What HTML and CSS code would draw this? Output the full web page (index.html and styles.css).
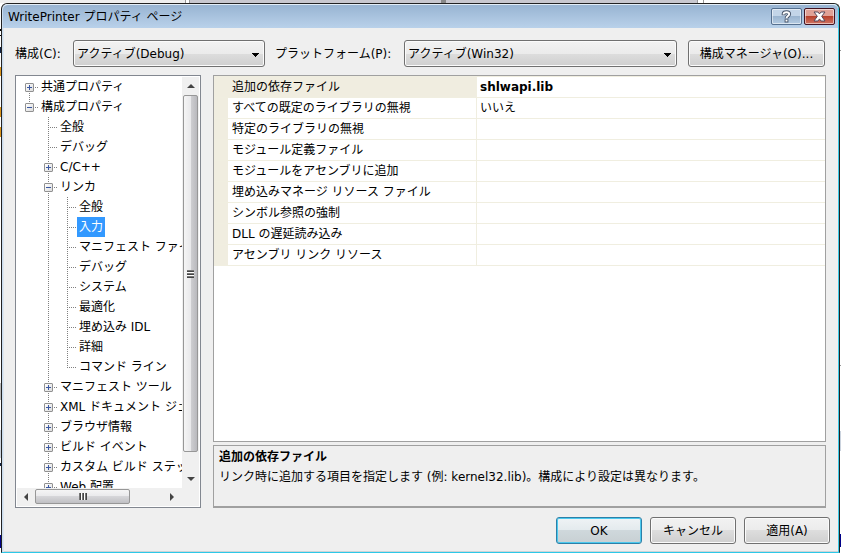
FILE: index.html
```html
<!DOCTYPE html>
<html lang="ja">
<head>
<meta charset="utf-8">
<title>WritePrinter プロパティ ページ</title>
<link rel="stylesheet" href="styles.css">
</head>
<body>
<main class="dialog">
  <header class="titlebar">
    <h1 class="title">WritePrinter プロパティ ページ</h1>
    <button class="caption help" type="button" aria-label="ヘルプ">
      <svg width="13" height="13" viewBox="0 0 13 13" aria-hidden="true"><path d="M3.6 5.2V3.9C3.6 1.4 9.2 1.4 9.2 4C9.2 6 6.5 5.9 6.5 8.6M6.5 9.2V12.4" fill="none" stroke="#48566b" stroke-width="3.8"/><path d="M3.6 4.6V3.9C3.6 1.6 9.2 1.6 9.2 4C9.2 6 6.5 5.9 6.5 8.2M6.5 9.8V11.6" fill="none" stroke="#fff" stroke-width="1.9"/></svg>
    </button>
    <button class="caption close" type="button" aria-label="閉じる">
      <svg width="13" height="11" viewBox="0 0 13 11" aria-hidden="true"><path d="M1 1H4.9L6.5 2.9L8.1 1H12L8.7 5.3L12 10H8.1L6.5 7.9L4.9 10H1L4.3 5.3Z" fill="#fff" stroke="#53475a"/></svg>
    </button>
  </header>

  <form class="content">
    <div class="toolbar">
      <label class="config-label" for="config">構成(C):</label>
      <select class="combo config" id="config"><option>アクティブ(Debug)</option></select>
      <label class="platform-label" for="platform">プラットフォーム(P):</label>
      <select class="combo platform" id="platform"><option>アクティブ(Win32)</option></select>
      <button class="btn manager" type="button">構成マネージャ(O)...</button>
    </div>

    <div class="panes">
      <nav class="tree-box">
        <div class="tree-view">
          <ul class="tree">
            <li><div class="row"><button class="expander plus" type="button" aria-label="展開"></button><span class="node">共通プロパティ</span></div></li>
            <li><div class="row"><button class="expander" type="button" aria-label="折りたたむ"></button><span class="node">構成プロパティ</span></div>
              <ul>
                <li><div class="row"><span class="node">全般</span></div></li>
                <li><div class="row"><span class="node">デバッグ</span></div></li>
                <li><div class="row"><button class="expander plus" type="button" aria-label="展開"></button><span class="node">C/C++</span></div></li>
                <li><div class="row"><button class="expander" type="button" aria-label="折りたたむ"></button><span class="node">リンカ</span></div>
                  <ul>
                    <li><div class="row"><span class="node">全般</span></div></li>
                    <li><div class="row"><span class="node selected">入力</span></div></li>
                    <li><div class="row"><span class="node">マニフェスト ファイル</span></div></li>
                    <li><div class="row"><span class="node">デバッグ</span></div></li>
                    <li><div class="row"><span class="node">システム</span></div></li>
                    <li><div class="row"><span class="node">最適化</span></div></li>
                    <li><div class="row"><span class="node">埋め込み IDL</span></div></li>
                    <li><div class="row"><span class="node">詳細</span></div></li>
                    <li><div class="row"><span class="node">コマンド ライン</span></div></li>
                  </ul>
                </li>
                <li><div class="row"><button class="expander plus" type="button" aria-label="展開"></button><span class="node">マニフェスト ツール</span></div></li>
                <li><div class="row"><button class="expander plus" type="button" aria-label="展開"></button><span class="node">XML ドキュメント ジェネレータ</span></div></li>
                <li><div class="row"><button class="expander plus" type="button" aria-label="展開"></button><span class="node">ブラウザ情報</span></div></li>
                <li><div class="row"><button class="expander plus" type="button" aria-label="展開"></button><span class="node">ビルド イベント</span></div></li>
                <li><div class="row"><button class="expander plus" type="button" aria-label="展開"></button><span class="node">カスタム ビルド ステップ</span></div></li>
                <li class="more"><div class="row"><button class="expander plus" type="button" aria-label="展開"></button><span class="node">Web 配置</span></div></li>
              </ul>
            </li>
          </ul>
        </div>
        <div class="vscroll" aria-hidden="true">
          <span class="arrow"><svg width="8" height="4" viewBox="0 0 8 4"><path d="M0 4L4 0L8 4Z" fill="#444"/></svg></span>
          <span class="thumb"><i class="grip"></i></span>
          <span class="arrow"><svg width="8" height="4" viewBox="0 0 8 4"><path d="M0 0L4 4L8 0Z" fill="#444"/></svg></span>
        </div>
        <div class="hscroll" aria-hidden="true">
          <span class="arrow"><svg width="4" height="8" viewBox="0 0 4 8"><path d="M4 0L0 4L4 8Z" fill="#444"/></svg></span>
          <span class="thumb"><i class="grip"></i></span>
          <span class="arrow"><svg width="4" height="8" viewBox="0 0 4 8"><path d="M0 0L4 4L0 8Z" fill="#444"/></svg></span>
        </div>
      </nav>

      <section class="properties">
        <div class="sheet">
          <table class="grid">
            <tbody>
              <tr class="current"><th scope="row">追加の依存ファイル</th><td>shlwapi.lib</td></tr>
              <tr><th scope="row">すべての既定のライブラリの無視</th><td>いいえ</td></tr>
              <tr><th scope="row">特定のライブラリの無視</th><td></td></tr>
              <tr><th scope="row">モジュール定義ファイル</th><td></td></tr>
              <tr><th scope="row">モジュールをアセンブリに追加</th><td></td></tr>
              <tr><th scope="row">埋め込みマネージ リソース ファイル</th><td></td></tr>
              <tr><th scope="row">シンボル参照の強制</th><td></td></tr>
              <tr><th scope="row">DLL の遅延読み込み</th><td></td></tr>
              <tr><th scope="row">アセンブリ リンク リソース</th><td></td></tr>
            </tbody>
          </table>
        </div>
        <div class="description">
          <h2>追加の依存ファイル</h2>
          <p>リンク時に追加する項目を指定します (例: kernel32.lib)。構成により設定は異なります。</p>
        </div>
      </section>
    </div>

    <footer class="actions">
      <button class="btn default" type="button">OK</button>
      <button class="btn" type="button">キャンセル</button>
      <button class="btn" type="button">適用(A)</button>
    </footer>
  </form>
</main>
</body>
</html>
```
FILE: styles.css
```css
* { box-sizing: border-box; }

body {
  margin: 0;
  height: 100vh;
  padding: 3px 1px 0;
  display: flex;
  overflow: hidden;
  font: 12px/20px "DejaVu Sans", "Noto Sans CJK JP", sans-serif;
  color: #000;
  /* slivers of the editor window behind the dialog */
  background:
    linear-gradient(#0000 29px, #000 29px 31px, #0000 31px 35px, #000 35px 36px, #0000 36px 47px, #124 47px 53px, #0000 53px 67px, #d9941c 67px 76px, #0000 76px 107px, #d9941c 107px 117px, #0000 117px 127px, #d9941c 127px 137px, #0000 137px 383px, #bbb 383px 400px, #0000 400px 430px, #cbd3de 430px 458px, #0000 458px 463px, #124 463px 466px, #0000 466px 535px, #008 535px 548px, #0000 548px) 0 0 / 1px 100% no-repeat,
    linear-gradient(#0000 50px, #999 50px 51px, #0000 51px 365px, #999 365px 366px, #0000 366px 431px, #cbd3de 431px 451px, #0000 451px 534px, #008 534px 547px, #0000 547px) 100% 0 / 1px 100% no-repeat,
    linear-gradient(90deg, #eee 185px, #999 185px 186px, #fff 186px 189px, #999 189px 190px, #c9c8cf 190px 441px, #888 441px 446px, #c9c8cf 446px 697px, #999 697px 698px, #fff 698px 703px, #999 703px 704px, #fff 704px) 0 0 / 100% 3px no-repeat,
    #fff;
}

.dialog {
  flex: 1;
  min-width: 0;
  display: flex;
  flex-direction: column;
  background: #efefef;
  border: 1px solid #222;
  border-bottom-color: #2cc8e8;
  border-radius: 6px 6px 0 0;
  box-shadow: inset 1px 0 #c9dcef, inset 2px 0 #dfe6ed, inset -1px 0 #3ccbe8, inset 0 -1px #cfd3d6;
}

.titlebar {
  display: flex;
  align-items: center;
  height: 24px;
  margin: 0 1px;
  padding: 0 3px 0 5px;
  border-top: 1px solid #e3edf7;
  border-radius: 5px 5px 0 0;
  background: linear-gradient(#98b4d2, #b9d1ea);
}
.title { flex: 1; margin: 0; font-size: 12px; font-weight: 400; }
.caption {
  display: grid;
  place-items: center;
  width: 31px;
  height: 17px;
  margin-left: 2px;
  padding: 0;
  border: 1px solid #56708f;
  border-radius: 2px;
  box-shadow: inset 0 0 0 1px #ffffff88;
}
.help { background: linear-gradient(#c3d5e8 50%, #9bb5d0 50%, #b4cbe2); }
.close { background: linear-gradient(#e0a196 45%, #b8412c 50%, #cf7463); border-color: #431422; }

.content {
  flex: 1;
  min-height: 0;
  display: flex;
  flex-direction: column;
  padding: 12px 13px 8px 13px;
}

.toolbar { display: flex; align-items: center; padding-right: 1px; }
.config-label { width: 58px; }
.platform-label { width: 139px; padding-left: 10px; }
.combo, .btn {
  height: 27px;
  padding: 0;
  font: inherit;
  color: #000;
  border: 1px solid #707070;
  border-radius: 3px;
  box-shadow: inset 0 0 0 1px #fbfbfb;
  background: linear-gradient(#f2f2f2, #ebebeb 50%, #dddddd 50%, #cfcfcf);
}
/* the stacked one-pixel bars form the drop-down arrow */
.combo {
  appearance: none;
  padding: 0 20px 0 3px;
  background:
    linear-gradient(#000, #000) right 5px top 12px / 7px 1px no-repeat,
    linear-gradient(#000, #000) right 6px top 13px / 5px 1px no-repeat,
    linear-gradient(#000, #000) right 7px top 14px / 3px 1px no-repeat,
    linear-gradient(#000, #000) right 8px top 15px / 1px 1px no-repeat,
    linear-gradient(#f2f2f2, #ebebeb 50%, #dddddd 50%, #cfcfcf);
}
.config { width: 192px; }
.platform { flex: 1; min-width: 0; }
.manager { width: 137px; margin-left: 11px; }

.panes {
  flex: 1;
  min-height: 0;
  display: flex;
  gap: 12px;
  margin: 8px 0 9px;
}

.tree-box {
  width: 186px;
  display: grid;
  grid-template-columns: minmax(0, 1fr) 17px;
  grid-template-rows: minmax(0, 1fr) 18px;
  padding: 1px;
  border: 1px solid #828790;
  background: #fff;
}
.tree-view { overflow: hidden; padding-left: 3px; }
.tree, .tree ul { list-style: none; margin: 0; padding: 0; }
.tree { white-space: nowrap; }
.tree li {
  padding-left: 19px;
  background: repeating-linear-gradient(#808080 0 1px, #0000 1px 2px) 9px 0 / 1px 100% no-repeat;
}
.tree li:last-child { background-size: 1px 10px; }
.tree li.more { background-size: 1px 100%; }
.tree > li:first-child { background-position: 9px 10px; }
.row {
  display: flex;
  align-items: center;
  height: 20px;
  margin-left: -10px;
  padding-left: 10px;
  background: repeating-linear-gradient(90deg, #808080 0 1px, #0000 1px 2px) 0 10px / 9px 1px no-repeat;
}
.expander {
  flex: none;
  width: 9px;
  height: 9px;
  margin: 1px 5px 0 -14px;
  padding: 0;
  border: 1px solid #919191;
  border-radius: 1px;
  background:
    linear-gradient(#3a57a0, #3a57a0) 1px 3px / 5px 1px no-repeat,
    linear-gradient(135deg, #fff, #dcdcdc);
}
.expander.plus {
  background:
    linear-gradient(#3a57a0, #3a57a0) 1px 3px / 5px 1px no-repeat,
    linear-gradient(#3a57a0, #3a57a0) 3px 1px / 1px 5px no-repeat,
    linear-gradient(135deg, #fff, #dcdcdc);
}
.node { padding: 0 2px; }
.selected { background: #3399ff; color: #fff; }

.vscroll, .hscroll { display: flex; background: #f0f0f0; }
.vscroll { flex-direction: column; padding: 0 1px; }
.hscroll { grid-column: 1 / -1; padding: 1px 18px 2px 0; }
.arrow { flex: none; width: 18px; display: grid; place-items: center; }
.vscroll .arrow { width: auto; height: 18px; }
.vscroll .arrow:last-child { height: 18px; }
.hscroll .arrow:last-child { margin-left: auto; }
.thumb {
  display: grid;
  place-items: center;
  border: 1px solid #979797;
  border-radius: 2px;
}
.vscroll .thumb { flex: 1; margin-bottom: 18px; background: linear-gradient(90deg, #f5f5f5, #e9e9eb 50%, #d0d0d3 50%, #b9b9bd); }
.hscroll .thumb { width: 95px; background: linear-gradient(#f5f5f5, #e9e9eb 50%, #d6d6d9 50%, #c0c0c4); }
.grip { width: 7px; height: 8px; background: repeating-linear-gradient(#777 0 1px, #444 1px 2px, #fff 2px 3px); }
.hscroll .grip { width: 8px; height: 7px; background: repeating-linear-gradient(90deg, #777 0 1px, #444 1px 2px, #fff 2px 3px); }

.properties { flex: 1; min-width: 0; display: flex; flex-direction: column; gap: 3px; }
.sheet { flex: 1; min-height: 0; overflow: hidden; border: 1px solid #a0a0a0; background: #fff; }
.grid { width: 100%; table-layout: fixed; border-collapse: separate; border-spacing: 0; border-top: 1px solid #f0eee0; }
.grid th, .grid td {
  height: 21px;
  padding: 0 3px;
  border-bottom: 1px solid #f0eee0;
  line-height: 20px;
  text-align: left;
  font-weight: 400;
  white-space: nowrap;
}
.grid th { width: 263px; padding-left: 18px; border-right: 1px solid #f0eee0; background: linear-gradient(#f0ede0, #f0ede0) 0 0 / 14px 100% no-repeat; }
.grid .current th { background-size: 100% 100%; }
.grid .current td { font-weight: 700; }

.description {
  height: 63px;
  padding: 1px 5px;
  border: 1px solid #a0a0a0;
  border-bottom-width: 2px;
}
.description h2, .description p { margin: 0; font-size: 12px; line-height: 20px; }

.actions { display: flex; justify-content: flex-end; gap: 8px; margin-right: -4px; }
.actions .btn { width: 86px; }
.actions .default {
  border-color: #2c80a8;
  box-shadow: inset 0 0 0 1px #4cc9ee;
  background: linear-gradient(#eff3f5, #e3eaed 50%, #cfd8dc 50%, #c8d0d3);
}
```
